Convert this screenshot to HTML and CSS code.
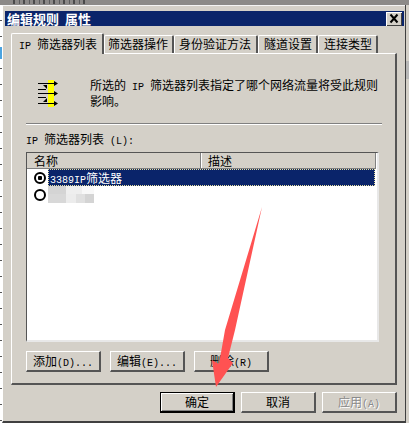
FILE: index.html
```html
<!DOCTYPE html>
<html lang="zh-CN">
<head>
    <meta charset="UTF-8">
    <meta name="viewport" content="width=device-width, initial-scale=1.0">
    <title>编辑规则 属性</title>
    <link rel="stylesheet" href="styles.css">
</head>
<body>
    <div class="top-strip"></div>
    <div class="desktop">
        <div class="left-strip">
            <div class="left-mark"></div>
        </div>
        <div class="dialog">
            <div class="titlebar">
                <span class="title">编辑规则 属性</span>
                <span class="close">
                    <svg width="16" height="14" viewBox="0 0 16 14">
                        <path d="M4.5 2.5l7 8M11.5 2.5l-7 8" stroke="#000" stroke-width="2" fill="none"/>
                    </svg>
                </span>
            </div>
            <div class="tabs">
                <div class="tab active"><span class="en">IP </span>筛选器列表</div>
                <div class="tab tab-2">筛选器操作</div>
                <div class="tab tab-3">身份验证方法</div>
                <div class="tab tab-4">隧道设置</div>
                <div class="tab tab-5">连接类型</div>
            </div>
            <div class="panel">
                <div class="intro">
                    <svg class="intro-icon" width="20" height="28" viewBox="0 0 20 28">
                        <rect x="10" y="0" width="6" height="27" fill="#ffff00"/>
                        <path d="M0 3.5h17M0 13.5h17M0 23.5h17M0 9.5h8M0 17.5h8" stroke="#000" fill="none"/>
                        <path d="M16 1l4 2.5-4 2.5zM16 11l4 2.5-4 2.5zM16 21l4 2.5-4 2.5z" fill="#000"/>
                        <path d="M5 5l4 0 0 4zM5 22l4 0 0-4z" fill="#000"/>
                    </svg>
                    <p class="intro-text">所选的<span class="en"> IP </span>筛选器列表指定了哪个网络流量将受此规则<br>影响。</p>
                </div>
                <div class="rule"></div>
                <div class="list-label"><span class="en">IP </span>筛选器列表<span class="en"> (L):</span></div>
                <div class="listbox">
                    <div class="list-head">
                        <div class="col col-name">名称</div>
                        <div class="col col-desc">描述</div>
                    </div>
                    <div class="row">
                        <span class="radio checked"></span>
                        <span class="row-text selected"><span class="en">3389IP</span>筛选器</span>
                    </div>
                    <div class="row">
                        <span class="radio"></span>
                        <span class="mosaic"></span>
                    </div>
                </div>
                <div class="list-buttons">
                    <div class="btn">添加<span class="en">(D)...</span></div>
                    <div class="btn">编辑<span class="en">(E)...</span></div>
                    <div class="btn btn-delete">删除<span class="en">(R)</span></div>
                </div>
            </div>
            <div class="footer">
                <div class="btn btn-default">确定</div>
                <div class="btn">取消</div>
                <div class="btn disabled">应用<span class="en">(A)</span></div>
            </div>
        </div>
        <div class="right-strip">
            <div class="right-mark"></div>
        </div>
    </div>
    <svg class="arrow" width="409" height="424" viewBox="0 0 409 424">
        <path d="M262 207L235 330 228 358 233 363 216 387 212 360 219 364 225 330z" fill="#ff5252"/>
    </svg>
</body>
</html>
```

FILE: styles.css
```css
/* page around the dialog */
body {
    margin: 0;
    width: 409px;
    height: 424px;
    overflow: hidden;
    background-color: #fff;
    font-family: "Noto Sans CJK SC", "Liberation Sans", sans-serif;
    font-size: 12px;
    color: #000;
}
.en {
    font-family: "Liberation Mono", monospace;
    font-size: 10px;
    white-space: pre;
}
.top-strip {
    height: 5px;
    background:
        repeating-linear-gradient(90deg, #8c8a88 0 3px, #4a4a4a 3px 5px, #8c8a88 5px 9px, #5c5c5c 9px 10px) 10px 0 / 78px 4px no-repeat,
        #8c8a88;
}
.desktop {
    display: flex;
    height: 418px;
}
.left-strip {
    width: 2px;
    padding-top: 42px;
    background: repeating-linear-gradient(180deg, #fff 0 15px, #555 15px 16px);
}
.left-mark {
    height: 12px;
    background-color: #4aa3e0;
}
.right-strip {
    width: 4px;
    box-sizing: border-box;
    padding-top: 56px;
    background-color: #d4d0c8;
    border-left: 1px solid #404040;
}
.right-mark {
    height: 18px;
    background-color: #b8b8b8;
}

/* dialog frame */
.dialog {
    width: 403px;
    height: 418px;
    box-sizing: border-box;
    padding: 5px 1px 0 2px;
    background-color: #d4d0c8;
    border-top: 1px solid #f4f4f4;
    border-left: 1px solid #fff;
    border-bottom: 2px solid #404040;
}
.titlebar {
    display: flex;
    align-items: center;
    justify-content: space-between;
    height: 15px;
    padding: 0 2px;
    background-color: #0a246a;
    color: #fff;
}
.title {
    font-size: 13px;
    font-weight: bold;
    line-height: 15px;
    word-spacing: 3px;
}
.close {
    display: flex;
    width: 16px;
    height: 14px;
    background-color: #d4d0c8;
    box-shadow: inset 1px 1px 0 #fff, inset -1px -1px 0 #404040;
}

/* tabs */
.tabs {
    display: flex;
    align-items: flex-end;
    height: 27px;
    padding-left: 6px;
}
.tab {
    box-sizing: border-box;
    width: 70px;
    height: 18px;
    padding-left: 3px;
    line-height: 15px;
    border-top: 1px solid #fff;
    border-left: 1px solid #fff;
    border-right: 2px solid #555;
    border-radius: 2px 2px 0 0;
    white-space: nowrap;
}
.tab.active {
    position: relative;
    width: 93px;
    height: 21px;
    margin-bottom: -1px;
    padding-left: 7px;
    line-height: 19px;
    background-color: #d4d0c8;
}
.tab-3 {
    width: 84px;
    padding-left: 4px;
}
.tab-4, .tab-5 {
    width: 60px;
    padding-left: 5px;
}

/* tab page */
.panel {
    box-sizing: border-box;
    width: 386px;
    height: 332px;
    margin-left: 6px;
    padding: 0 14px;
    border-top: 1px solid #fff;
    border-left: 1px solid #fff;
    border-right: 2px solid #555;
    border-bottom: 2px solid #555;
}
.intro {
    display: flex;
    height: 69px;
    padding: 24px 0 0 12px;
    box-sizing: border-box;
}
.intro-icon {
    flex: none;
    margin: 2px 32px 0 0;
}
.intro-text {
    margin: 0;
    line-height: 13px;
    white-space: nowrap;
}
.rule {
    height: 1px;
    width: 356px;
    background-color: #808080;
    border-bottom: 1px solid #fff;
}
.list-label {
    height: 27px;
    padding-top: 7px;
    box-sizing: border-box;
    line-height: 14px;
}

/* list */
.listbox {
    box-sizing: border-box;
    width: 353px;
    height: 190px;
    background-color: #fff;
    border-top: 1px solid #555;
    border-left: 1px solid #555;
    border-right: 2px solid #e8e8e8;
    border-bottom: 2px solid #e8e8e8;
}
.list-head {
    display: flex;
    height: 15px;
    margin-right: 1px;
    line-height: 15px;
    background-color: #d4d0c8;
    border-bottom: 1px solid #808080;
}
.col {
    box-sizing: border-box;
    border-right: 1px solid #808080;
}
.col-name {
    width: 174px;
    padding-left: 7px;
}
.col-desc {
    flex: 1;
    padding-left: 6px;
    border-left: 1px solid #fff;
}
.row {
    display: flex;
    align-items: center;
    height: 17px;
    padding-left: 7px;
}
.radio {
    flex: none;
    box-sizing: border-box;
    width: 12px;
    height: 12px;
    margin-right: 2px;
    background-color: #fff;
    border: 2px solid #000;
    border-radius: 50%;
}
.radio.checked {
    background: radial-gradient(circle, #000 0 2px, #fff 2.5px);
}
.row-text {
    flex: 1;
    box-sizing: border-box;
    height: 17px;
    margin-right: 2px;
    line-height: 15px;
}
.selected {
    padding-left: 1px;
    background-color: #0a246a;
    color: #fff;
    border: 1px dotted #e8e0a0;
}
.mosaic {
    width: 46px;
    height: 17px;
    background:
        linear-gradient(90deg, #d8d8d8 0 18px, #ececec 18px 28px, #e0e0e0 28px 37px, #d4d4d4 37px 46px) 0 8px / 46px 9px no-repeat,
        linear-gradient(90deg, #d4d4d4 0 18px, #eeeeee 18px 34px, #f8f8f8 34px 46px) 0 0 / 46px 8px no-repeat;
}

/* buttons */
.btn {
    box-sizing: border-box;
    width: 75px;
    height: 21px;
    line-height: 18px;
    text-align: center;
    white-space: nowrap;
    background-color: #d4d0c8;
    border-top: 1px solid #fff;
    border-left: 1px solid #fff;
    border-right: 2px solid #555;
    border-bottom: 2px solid #555;
}
.list-buttons {
    display: flex;
    gap: 9px;
    margin-top: 9px;
}
.footer {
    display: flex;
    justify-content: flex-end;
    gap: 6px;
    margin-top: 7px;
    margin-right: 7px;
}
.btn-default {
    border: 1px solid #000;
    border-right: 2px solid #000;
    border-bottom: 2px solid #000;
    box-shadow: inset 1px 1px 0 #fff, inset -1px -1px 0 #808080;
}
.disabled {
    color: #8a8a8a;
    text-shadow: 1px 1px 0 #fff;
}

/* red annotation drawn over the screenshot */
.arrow {
    position: absolute;
    left: 0;
    top: 0;
}
```
